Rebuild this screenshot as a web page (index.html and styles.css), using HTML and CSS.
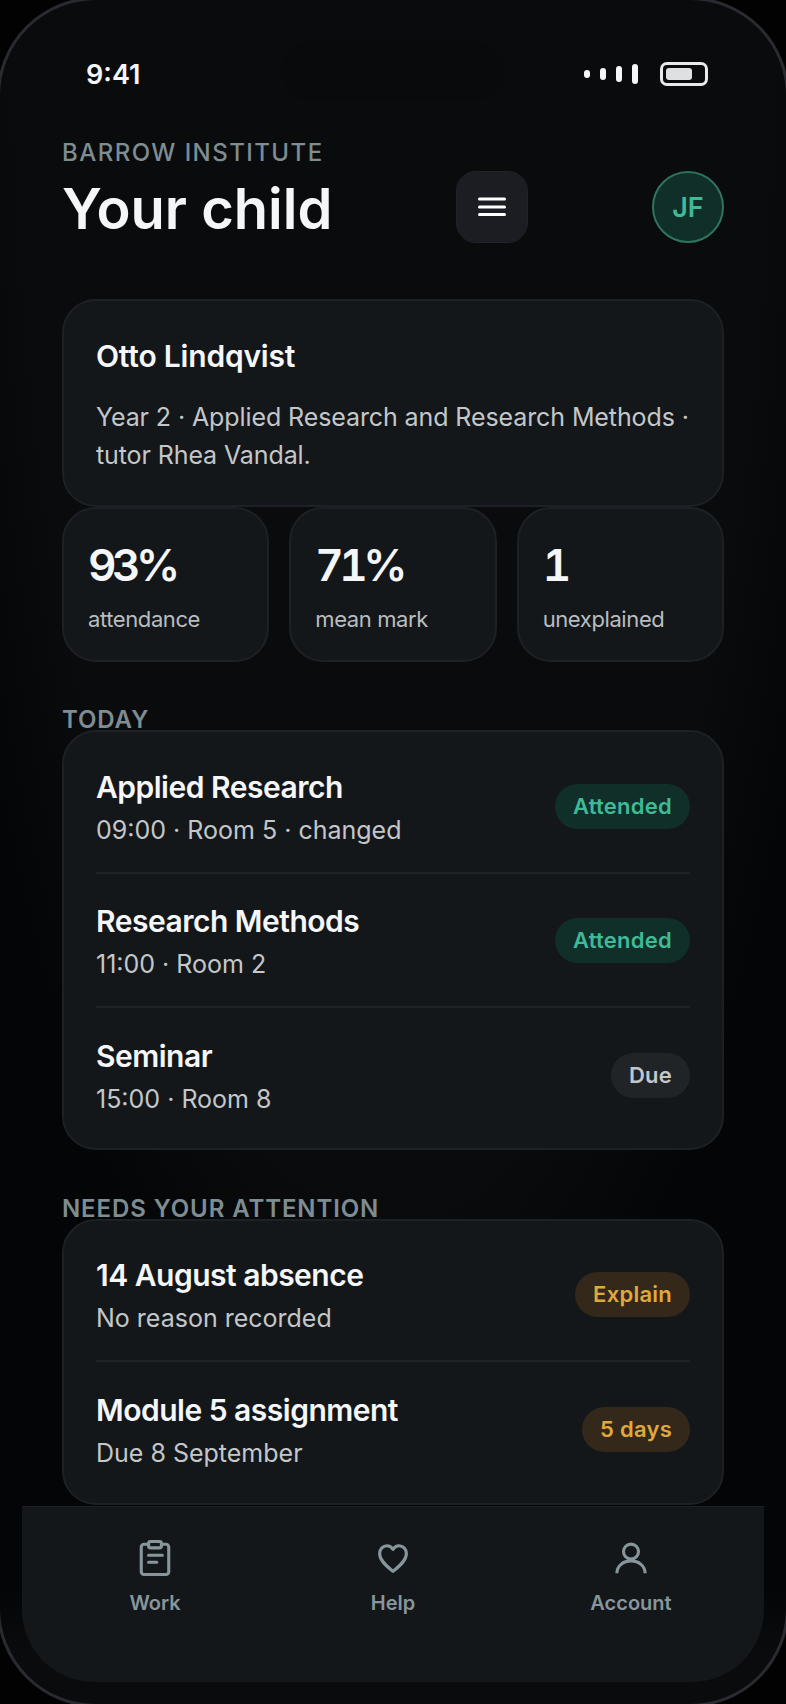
FILE: index.html
```html
<!DOCTYPE html>
<html lang="en">
<head>
    <meta charset="UTF-8">
    <meta name="viewport" content="width=device-width, initial-scale=1.0">
    <title>Barrow Institute | Your child</title>
    <link rel="stylesheet" href="styles.css">
</head>
<body>
    <div class="phone">
        <div class="island"></div>
        <div class="status">
            <span class="time">9:41</span>
            <div class="status-icons">
                <div class="signal"><i class="s1"></i><i class="s2"></i><i class="s3"></i><i class="s4"></i></div>
                <div class="battery"><i></i></div>
            </div>
        </div>
        <main class="content">
            <header class="top">
                <div class="top-text">
                    <div class="eyebrow">BARROW INSTITUTE</div>
                    <h1>Your child</h1>
                </div>
                <button class="menu" aria-label="Menu">
                    <svg width="28" height="22" viewBox="0 0 28 22"><path d="M1.500 3h25M1.500 11h25M1.500 18.500h25" stroke="#fff" stroke-width="3" stroke-linecap="round"/></svg>
                </button>
                <div class="avatar">JF</div>
            </header>

            <section class="card intro">
                <h2>Otto Lindqvist</h2>
                <p>Year 2 · Applied Research and Research Methods · tutor Rhea Vandal.</p>
            </section>

            <div class="stats">
                <div class="card stat"><b>93%</b><span>attendance</span></div>
                <div class="card stat"><b>71%</b><span>mean mark</span></div>
                <div class="card stat"><b>1</b><span>unexplained</span></div>
            </div>

            <div class="label today">TODAY</div>
            <section class="card list today-list">
                <div class="row">
                    <div class="row-info"><h3>Applied Research</h3><p>09:00 · Room 5 · changed</p></div>
                    <span class="pill green">Attended</span>
                </div>
                <div class="row">
                    <div class="row-info"><h3>Research Methods</h3><p>11:00 · Room 2</p></div>
                    <span class="pill green">Attended</span>
                </div>
                <div class="row">
                    <div class="row-info"><h3>Seminar</h3><p>15:00 · Room 8</p></div>
                    <span class="pill grey">Due</span>
                </div>
            </section>

            <div class="label">NEEDS YOUR ATTENTION</div>
            <section class="card list">
                <div class="row">
                    <div class="row-info"><h3>14 August absence</h3><p>No reason recorded</p></div>
                    <span class="pill amber">Explain</span>
                </div>
                <div class="row">
                    <div class="row-info"><h3>Module 5 assignment</h3><p>Due 8 September</p></div>
                    <span class="pill amber">5 days</span>
                </div>
            </section>
        </main>
        <nav class="tabs">
            <a href="#">
                <svg width="44" height="44" viewBox="0 0 24 24" fill="none" stroke="#87969b" stroke-width="1.700" stroke-linecap="round" stroke-linejoin="round"><path d="M8.500 4.500H6a1.500 1.500 0 0 0-1.500 1.500v13.500A1.500 1.500 0 0 0 6 21h12a1.500 1.500 0 0 0 1.500-1.500V6A1.500 1.500 0 0 0 18 4.500h-2.500"/><rect x="8.500" y="3" width="7" height="3.500" rx="1"/><path d="M8.500 10.500h7.500M8.500 14.300h4.500"/></svg>
                Work
            </a>
            <a href="#">
                <svg width="44" height="44" viewBox="0 0 24 24" fill="none" stroke="#87969b" stroke-width="1.700" stroke-linecap="round" stroke-linejoin="round"><path d="M12 19.300C9.500 17.200 4.700 13.800 4.700 9.600 4.700 7 6.600 5.300 8.700 5.300 10 5.300 11.200 6 12 7.300 12.800 6 14 5.300 15.300 5.300 17.400 5.300 19.300 7 19.300 9.600 19.300 13.800 14.500 17.200 12 19.300Z"/></svg>
                Help
            </a>
            <a href="#">
                <svg width="44" height="44" viewBox="0 0 24 24" fill="none" stroke="#87969b" stroke-width="1.700" stroke-linejoin="round"><circle cx="12" cy="8.500" r="4.100"/><path d="M4.300 20.300c0-4 3.500-6.700 7.700-6.700s7.700 2.700 7.700 6.700"/></svg>
                Account
            </a>
        </nav>
    </div>
</body>
</html>
```

FILE: styles.css
```css
* {
    box-sizing: border-box;
}
body {
    margin: 0;
    height: 1704px;
    overflow: hidden;
    background-color: #020203;
    font-family: Inter, "Liberation Sans", sans-serif;
    color: #f5f6f8;
}
/* the 3px border sits just outside the window, only the corners show */
.phone {
    position: relative;
    width: 792px;
    height: 1710px;
    margin: -3px;
    border: 3px solid #2a2b30;
    border-radius: 99px;
    background:
        linear-gradient(180deg, #0a0b0d00 1590px, #0a0b0d 1650px),
        radial-gradient(ellipse 470px 1500px at 50% 0, #0a0b0d 80%, #040506 100%);
    display: flex;
    flex-direction: column;
    overflow: hidden;
}
.island {
    position: absolute;
    left: 282px;
    top: 42px;
    width: 223px;
    height: 58px;
    border-radius: 29px;
    background-color: #090a0c;
}
.status {
    position: relative;
    display: flex;
    justify-content: space-between;
    align-items: center;
    height: 40px;
    margin-top: 54px;
    padding: 0 78px 0 86px;
}
.time {
    font-size: 27px;
    font-weight: 600;
}
.status-icons {
    display: flex;
    align-items: center;
    gap: 22px;
}
.signal {
    display: flex;
    align-items: center;
    gap: 10px;
}
.signal i {
    display: block;
    width: 6px;
    border-radius: 3px;
    background-color: #f5f6f8;
}
.s1 { height: 8px; }
.s2 { height: 12px; }
.s3 { height: 16px; }
.s4 { height: 20px; }
.battery {
    width: 48px;
    height: 24px;
    padding: 3px;
    border: 3px solid #e8e9eb;
    border-radius: 7px;
}
.battery i {
    display: block;
    width: 26px;
    height: 12px;
    border-radius: 3px;
    background-color: #dfe0e2;
}
.content {
    flex: 1;
    min-height: 0;
    padding: 0 62px;
}
.top {
    display: flex;
    justify-content: space-between;
    align-items: flex-end;
    margin-top: 44px;
}
.eyebrow {
    margin-bottom: 9px;
    font-size: 24px;
    line-height: 30px;
    font-weight: 500;
    letter-spacing: 0.06em;
    color: #7d8d92;
}
h1 {
    margin: 0 0 2px;
    font-size: 56px;
    line-height: 64px;
    font-weight: 600;
}
.menu {
    width: 72px;
    height: 72px;
    padding: 0;
    border: 1px solid #202228;
    border-radius: 20px;
    background-color: #1b1d22;
    display: flex;
    align-items: center;
    justify-content: center;
}
.avatar {
    width: 72px;
    height: 72px;
    border: 2px solid #2f7360;
    border-radius: 50%;
    background-color: #0f2f28;
    color: #41b998;
    font-size: 27px;
    font-weight: 600;
    display: flex;
    align-items: center;
    justify-content: center;
}
.card {
    border: 2px solid #1d2025;
    border-radius: 34px;
    background-color: #14171a;
}
.intro {
    height: 208px;
    margin-top: 56px;
    padding: 37px 32px 0;
}
h2 {
    margin: 0;
    font-size: 30px;
    line-height: 36px;
    font-weight: 600;
    letter-spacing: -0.2px;
}
.intro p {
    margin: 24px 0 0;
    font-size: 25px;
    line-height: 38px;
    letter-spacing: -0.1px;
    color: #c3c7ca;
}
.stats {
    display: grid;
    grid-template-columns: repeat(3, 1fr);
    gap: 20px;
}
.stat {
    height: 155px;
    padding: 30px 24px 0;
    display: flex;
    flex-direction: column;
}
.stat b {
    font-size: 44px;
    line-height: 52px;
    font-weight: 600;
    font-feature-settings: "tnum";
    letter-spacing: -4.5px;
}
.stat span {
    margin-top: 13px;
    font-size: 22px;
    line-height: 30px;
    letter-spacing: -0.4px;
    color: #b9bdc0;
}
.label {
    margin: 47px 0 -2px;
    font-size: 24px;
    line-height: 24px;
    font-weight: 600;
    letter-spacing: 0.9px;
    color: #7d8d92;
}
.today {
    margin-top: 46px;
}
.list {
    padding: 7px 32px;
}
.today-list {
    padding: 8px 32px 6px;
}
.row {
    display: flex;
    justify-content: space-between;
    align-items: center;
    height: 134px;
    border-bottom: 2px solid #1e2125;
}
.row:last-child {
    border-bottom: none;
}
.row-info {
    margin-top: 3px;
}
h3 {
    margin: 0;
    font-size: 30px;
    line-height: 38px;
    font-weight: 600;
    letter-spacing: -0.5px;
}
.row-info p {
    margin: 6px 0 0;
    font-size: 25px;
    line-height: 36px;
    color: #c3c7ca;
}
.pill {
    height: 45px;
    padding: 0 18px;
    border-radius: 23px;
    font-size: 22px;
    line-height: 45px;
    font-weight: 600;
    letter-spacing: 0.25px;
}
.green {
    background-color: #0f2f28;
    color: #41b998;
}
.grey {
    background-color: #212427;
    color: #c3c7ca;
}
.amber {
    background-color: #33281a;
    color: #e0a93c;
}
.tabs {
    display: grid;
    grid-template-columns: repeat(3, 1fr);
    height: 176px;
    margin: 0 22px 22px;
    padding: 29px 14px 0;
    border-top: 1px solid #1d2025;
    border-radius: 0 0 72px 72px;
    background-color: #14171a;
}
.tabs a {
    display: flex;
    flex-direction: column;
    align-items: center;
    gap: 11px;
    font-size: 20px;
    font-weight: 600;
    color: #87969b;
    text-decoration: none;
}
```
